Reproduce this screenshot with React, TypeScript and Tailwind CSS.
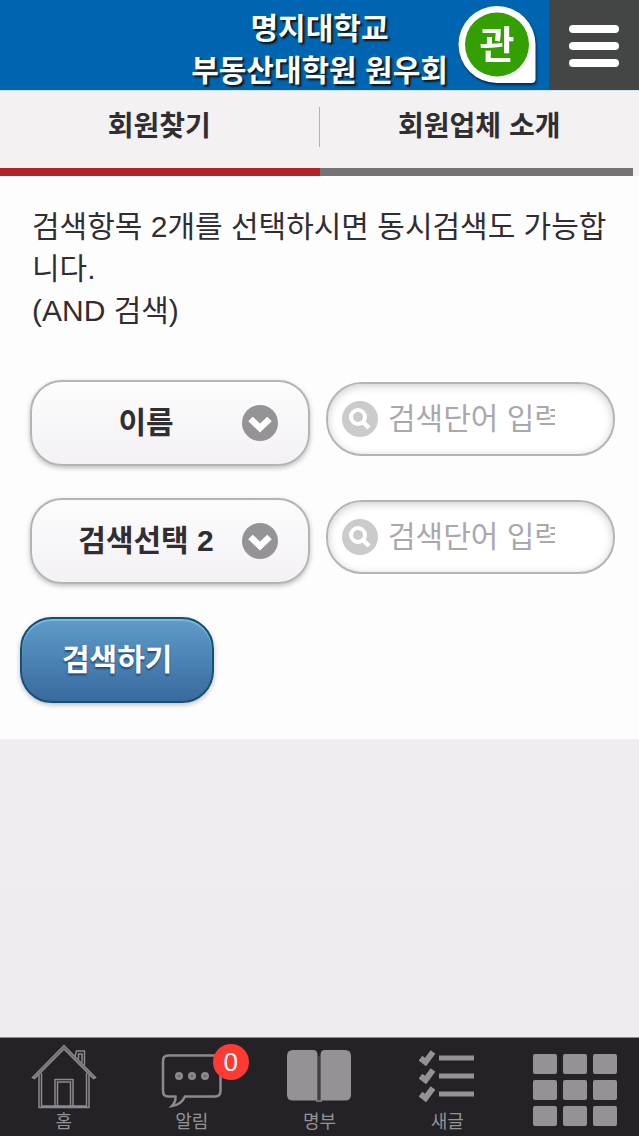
import { useState } from 'react';
import type { ReactNode } from 'react';

const campos = [
  { id: 'field1', label: '검색항목 1', options: ['이름', '회사명', '직책', '기수'] },
  { id: 'field2', label: '검색항목 2', options: ['검색선택 2', '회사명', '직책', '기수'] },
];

function LogoIcon() {
  return (
    <svg width="80" height="80" viewBox="0 0 80 80" className="drop-shadow-[1px_2px_1px_rgba(0,0,0,0.6)]">
      <path d="M40 0 A38.500 38.500 0 0 1 78.500 38.500 V73 Q78.500 77 74.500 77 H40 A38.500 38.500 0 0 1 40 0 Z" fill="#ffffff" />
      <circle cx="40" cy="38.500" r="32" fill="#339f00" />
      <text
        x="40"
        y="52"
        textAnchor="middle"
        fill="#ffffff"
        className="text-[38px] font-bold font-['Noto_Sans_CJK_KR',sans-serif]"
      >
        관
      </text>
    </svg>
  );
}

function HomeIcon() {
  return (
    <svg width="66" height="66" viewBox="0 0 66 66" fill="none" stroke="#8c8a8d" strokeWidth="1.500">
      <path d="M8 31 V63.500 H58 V31 M10.500 29 V62 H55.500 V29" />
      <path d="M1.500 33.500 L33 1.500 L64.500 33.500 L62.500 34.500 L33 5 L3.500 34.500 Z" fill="#5d5b5e" />
      <path d="M44 12.500 L45.500 7 H53.500 V21 M47.500 15 V10 H51 V18.500" />
      <path d="M24 63 V35.500 H42 V63 M26.500 63 V38 H39.500 V63" />
    </svg>
  );
}

function ChatIcon() {
  return (
    <svg width="62" height="66" viewBox="0 0 62 66" fill="none" stroke="#8c8a8d">
      <path
        d="M7 11.500 H54 Q59.500 11.500 59.500 17 V47 Q59.500 52.500 54 52.500 H24 Q20 61 11 62 Q15 58 14.500 52.500 H7 Q2 52.500 2 47 V17 Q2 11.500 7 11.500 Z"
        strokeWidth="2.500"
      />
      <g fill="#8c8a8d" stroke="none">
        <circle cx="18" cy="32" r="4" />
        <circle cx="31" cy="32" r="4" />
        <circle cx="44" cy="32" r="4" />
      </g>
      <g fill="#6d6b6e" stroke="none">
        <circle cx="18" cy="32" r="1.500" />
        <circle cx="31" cy="32" r="1.500" />
        <circle cx="44" cy="32" r="1.500" />
      </g>
    </svg>
  );
}

function BookIcon() {
  return (
    <svg width="66" height="66" viewBox="0 0 66 66">
      <path d="M7 6 H27 Q31.500 6 31.500 11 V56.500 H7 Q1 56.500 1 51 V12 Q1 6 7 6 Z" fill="#959296" />
      <path d="M39 6 H59 Q65 6 65 12 V51 Q65 56.500 59 56.500 H34.500 V11 Q34.500 6 39 6 Z" fill="#959296" />
      <path d="M30 57 H36" stroke="#757376" strokeWidth="2" />
      <path d="M33 12 V56" stroke="#5d5b5e" />
    </svg>
  );
}

function CheckListIcon() {
  return (
    <svg width="56" height="66" viewBox="0 0 56 66" fill="none" stroke="#959296">
      <path d="M1.500 14 L6.500 18 L14 8 M1.500 32 L6.500 36 L14 26 M1.500 50 L6.500 54 L14 44" strokeWidth="6" />
      <path d="M20 14 H55 M20 32 H55 M20 50 H55" strokeWidth="5" />
    </svg>
  );
}

function GridIcon() {
  return (
    <svg width="84" height="74" viewBox="0 0 84 74" fill="#959296">
      {[0, 26, 52].map((y) =>
        [0, 30, 60].map((x) => <rect key={`${x}-${y}`} x={x} y={y + 1} width="24" height="20" rx="2" />)
      )}
    </svg>
  );
}

function SearchIcon() {
  return (
    <svg width="36" height="36" viewBox="0 0 36 36" fill="none" className="shrink-0">
      <circle cx="18" cy="18" r="18" fill="#cccacc" />
      <circle cx="16" cy="16" r="7" stroke="#ffffff" strokeWidth="4" />
      <path d="M20.500 20.500 L27 27" stroke="#ffffff" strokeWidth="4.500" />
    </svg>
  );
}

function ArrowIcon() {
  return (
    <svg
      width="36"
      height="36"
      viewBox="0 0 36 36"
      fill="none"
      className="pointer-events-none absolute right-8 top-1/2 -translate-y-1/2"
    >
      <circle cx="18" cy="18" r="18" fill="#959396" />
      <path d="M8.500 14 L18 23 L27.500 14" stroke="#ffffff" strokeWidth="6.500" />
    </svg>
  );
}

function FooterLink({ label, badge, children }: { label: string; badge?: number; children: ReactNode }) {
  return (
    <a href="#" className="flex flex-col items-center pt-1.5 text-lg leading-6 text-[#959296]">
      <span className="relative">
        {children}
        {badge !== undefined && (
          <span className="absolute left-13 top-0 flex size-9 items-center justify-center rounded-full bg-[#fd3a34] text-[26px] leading-9 text-white">
            {badge}
          </span>
        )}
      </span>
      {label}
    </a>
  );
}

export default function App() {
  const [selected, setSelected] = useState<Record<string, string>>({ field1: '이름', field2: '검색선택 2' });
  const [words, setWords] = useState<Record<string, string>>({ field1: '', field2: '' });

  return (
    <div className="flex min-h-screen flex-col bg-linear-to-b from-[#f3f1f3] to-[#edebef] font-['Liberation_Sans','Noto_Sans_CJK_KR',sans-serif] text-[#302e31]">
      <header className="grid h-[90px] grid-cols-[1fr_auto_1fr] bg-[#0065b0]">
        <h1 className="col-start-2 pt-2 text-center text-3xl leading-[42px] font-bold whitespace-nowrap text-white [text-shadow:2px_2px_2px_#111111]">
          명지대학교
          <br />
          부동산대학원 원우회
        </h1>
        <div className="flex items-center justify-end gap-3">
          <a href="#" aria-label="관리자">
            <LogoIcon />
          </a>
          <button
            type="button"
            aria-label="메뉴"
            className="flex h-full w-[90px] flex-col items-center justify-center gap-[9px] bg-[#444645]"
          >
            <span className="h-2 w-[50px] rounded-full bg-white" />
            <span className="h-2 w-[50px] rounded-full bg-white" />
            <span className="h-2 w-[50px] rounded-full bg-white" />
          </button>
        </div>
      </header>

      <nav className="grid grid-cols-2 border-t border-[#cfe4f5] bg-[#f3f1f2] text-center text-[28px] leading-10 font-bold">
        <a href="#" className="flex flex-col pt-4">
          <span className="mb-[21px] border-r border-[#b5b3b6]">회원찾기</span>
          <span className="h-2 bg-[#b42229]" />
        </a>
        <a href="#" className="flex flex-col pt-4">
          <span className="mb-[21px]">회원업체 소개</span>
          <span className="mr-1.5 h-2 bg-[#757376]" />
        </a>
      </nav>

      <main className="bg-[#fefdfe] pt-[30px] pb-9">
        <p className="pr-6 pl-8 text-3xl leading-[42px]">
          검색항목 2개를 선택하시면 동시검색도 가능합니다.
          <br />
          (AND 검색)
        </p>

        <form onSubmit={(e) => e.preventDefault()}>
          <div className="mt-12 flex flex-col gap-8 pr-6 pl-[30px]">
            {campos.map((campo) => (
              <div key={campo.id} className="flex items-start gap-4">
                <div className="relative w-[280px] shrink-0">
                  <select
                    aria-label={campo.label}
                    value={selected[campo.id]}
                    onChange={(e) => setSelected({ ...selected, [campo.id]: e.target.value })}
                    className="h-[86px] w-full appearance-none rounded-[32px] border-2 border-[#b5b3b6] bg-linear-to-b from-[#fdfcfd] to-[#f3f1f4] pr-12 text-center text-3xl font-bold shadow-[0_2px_5px_rgba(0,0,0,0.25)]"
                  >
                    {campo.options.map((option) => (
                      <option key={option}>{option}</option>
                    ))}
                  </select>
                  <ArrowIcon />
                </div>
                <label className="mt-0.5 flex h-[74px] min-w-0 flex-1 items-center gap-2.5 rounded-[36px] border-2 border-[#b5b3b6] bg-white pr-[58px] pl-3.5 shadow-[inset_0_2px_8px_rgba(0,0,0,0.2)]">
                  <SearchIcon />
                  <input
                    type="text"
                    aria-label={`${campo.label} 검색단어`}
                    placeholder="검색단어 입력"
                    value={words[campo.id]}
                    onChange={(e) => setWords({ ...words, [campo.id]: e.target.value })}
                    className="w-full min-w-0 bg-transparent text-3xl outline-none placeholder:text-[#aaa8ab]"
                  />
                </label>
              </div>
            ))}
          </div>

          <button
            type="submit"
            className="mt-[33px] ml-5 h-[86px] rounded-[32px] border-2 border-[#145072] bg-linear-to-b from-[#5f9cc9] to-[#396a9f] px-10 text-3xl font-bold text-white shadow-[0_2px_5px_rgba(0,0,0,0.25),inset_0_2px_1px_rgba(150,205,240,0.6)] [text-shadow:0_2px_2px_#1f4a73]"
          >
            검색하기
          </button>
        </form>
      </main>

      <footer className="mt-auto grid h-[99px] grid-cols-5 border-t border-[#8c8a8d] bg-[#242226]">
        <FooterLink label="홈">
          <HomeIcon />
        </FooterLink>
        <FooterLink label="알림" badge={0}>
          <ChatIcon />
        </FooterLink>
        <FooterLink label="명부">
          <BookIcon />
        </FooterLink>
        <FooterLink label="새글">
          <CheckListIcon />
        </FooterLink>
        <a href="#" aria-label="전체메뉴" className="flex justify-center pt-[15px]">
          <GridIcon />
        </a>
      </footer>
    </div>
  );
}
